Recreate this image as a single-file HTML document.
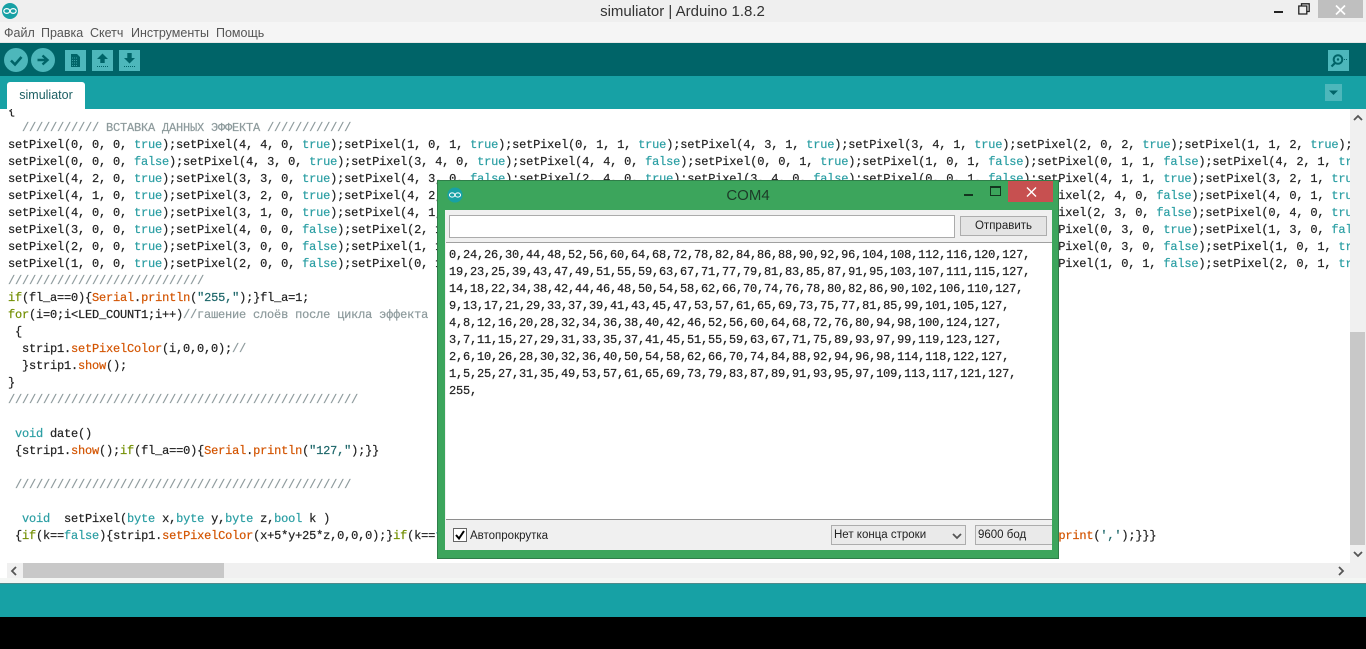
<!DOCTYPE html>
<html><head><meta charset="utf-8"><title>simuliator | Arduino 1.8.2</title>
<style>
html,body{margin:0;padding:0;width:1366px;height:649px;overflow:hidden;background:#000}
.a{position:absolute}
body{font-family:"Liberation Sans",sans-serif;color:#222}
#ed pre,#mon pre{margin:0;position:absolute;font:12px/17px "Liberation Mono","DejaVu Sans Mono",monospace;letter-spacing:-.2px;white-space:pre;-webkit-text-stroke:.2px currentColor}
#ed pre{left:8px;top:-6px;color:#222}
i{font-style:normal;color:#2a9ea3}
b{font-weight:normal;color:#d35400}
u{text-decoration:none;color:#728e00}
s{text-decoration:none;color:#8d9a9c}
em{font-style:normal;color:#1c6669}
.m{font-size:12.5px;color:#555;top:26px;line-height:15px}
.sel{background:#eaeaea;border:1px solid #adadad;box-sizing:border-box;font-size:11.5px;line-height:19px;color:#222;padding-left:2px}
</style></head><body>
<div class="a" style="left:0;top:0;width:1366px;height:22px;background:#efefef"></div>
<svg class="a" style="left:1px;top:2px" width="18" height="18" viewBox="0 0 18 18"><circle cx="9" cy="9" r="8" fill="#17a1a5"/><ellipse cx="5.8" cy="9" rx="3" ry="2.4" fill="none" stroke="#fff" stroke-width="1.2"/><ellipse cx="12.2" cy="9" rx="3" ry="2.4" fill="none" stroke="#fff" stroke-width="1.2"/></svg>
<div class="a" style="left:0;width:1365px;top:3px;text-align:center;font-size:15px;line-height:18px;color:#333">simuliator | Arduino 1.8.2</div>
<div class="a" style="left:1274px;top:11px;width:9px;height:2px;background:#222"></div>
<svg class="a" style="left:1298px;top:3px" width="12" height="12" viewBox="0 0 12 12"><path d="M3.5 2.5V.8h7.7v7.7H9M.8 3h8v8h-8z" fill="none" stroke="#222" stroke-width="1.3"/></svg>
<div class="a" style="left:1318px;top:0;width:45px;height:18px;background:#bfbfbf"></div>
<svg class="a" style="left:1335px;top:5px" width="11" height="10" viewBox="0 0 11 10"><path d="M1 .5L10 9.5M10 .5L1 9.5" stroke="#fff" stroke-width="1.7"/></svg>

<div class="a" style="left:0;top:22px;width:1366px;height:20px;background:#f5f5f5"></div>
<div class="a m" style="left:4px">Файл</div>
<div class="a m" style="left:41px">Правка</div>
<div class="a m" style="left:90px">Скетч</div>
<div class="a m" style="left:131px">Инструменты</div>
<div class="a m" style="left:216px">Помощь</div>
<div class="a" style="left:0;top:42px;width:1366px;height:1px;background:#e6e6e6"></div>

<div class="a" style="left:0;top:43px;width:1366px;height:33px;background:#006468"></div>
<div class="a" style="left:0;top:76px;width:1366px;height:33px;background:#17a1a5"></div>
<svg class="a" style="left:0;top:44px" width="150" height="32" viewBox="0 0 150 32">
<circle cx="16" cy="16" r="12" fill="#4db7bb"/><path d="M11 16.5l4 4 6.500-7.500" fill="none" stroke="#006468" stroke-width="2.600"/>
<circle cx="43" cy="16" r="12" fill="#4db7bb"/><path d="M37.500 16h8M42.500 11.500l5 4.500-5 4.500" fill="none" stroke="#006468" stroke-width="2.400"/>
<rect x="65" y="6" width="21" height="21" fill="#4db7bb"/><path d="M71 10h6l3 3v10h-9z" fill="#006468"/><path d="M72 14h6M72 16.500h6M72 19h6M72 21.500h6" stroke="#4db7bb" stroke-width=".8" stroke-dasharray="1 1"/>
<rect x="92" y="6" width="21" height="21" fill="#4db7bb"/><path d="M102.500 9.500l5.500 5.500h-3.300v4h-4.400v-4H97z" fill="#006468"/><path d="M97 22.500h11" stroke="#006468" stroke-dasharray="1 1"/>
<rect x="119" y="6" width="21" height="21" fill="#4db7bb"/><path d="M127.300 9h4.400v5h3.300l-5.500 5.500-5.500-5.500h3.300z" fill="#006468"/><path d="M124 22.500h11" stroke="#006468" stroke-dasharray="1 1"/>
</svg>
<svg class="a" style="left:1328px;top:50px" width="21" height="21" viewBox="0 0 21 21"><rect width="21" height="21" fill="#4db7bb"/><circle cx="10" cy="9.500" r="4.300" fill="none" stroke="#006468" stroke-width="2"/><circle cx="10" cy="9.500" r="1.200" fill="#006468"/><path d="M7 13l-3.500 3.500" stroke="#006468" stroke-width="2.200"/><path d="M16 9.500h3" stroke="#006468" stroke-dasharray="1 1"/></svg>
<div class="a" style="left:7px;top:82px;width:78px;height:27px;background:#fff;border-radius:3px 3px 0 0;text-align:center;font-size:12.5px;line-height:26px;color:#1c5f63">simuliator</div>
<svg class="a" style="left:1325px;top:84px" width="17" height="17" viewBox="0 0 17 17"><rect width="17" height="17" fill="#4db7bb"/><path d="M4 6.500h9L8.500 11z" fill="#006468"/></svg>

<div class="a" id="ed" style="left:0;top:109px;width:1350px;height:454px;background:#fff;overflow:hidden">
<pre>{
  <s>/////////// ВСТАВКА ДАННЫХ ЭФФЕКТА ////////////</s>
setPixel(0, 0, 0, <i>true</i>);setPixel(4, 4, 0, <i>true</i>);setPixel(1, 0, 1, <i>true</i>);setPixel(0, 1, 1, <i>true</i>);setPixel(4, 3, 1, <i>true</i>);setPixel(3, 4, 1, <i>true</i>);setPixel(2, 0, 2, <i>true</i>);setPixel(1, 1, 2, <i>true</i>);
setPixel(0, 0, 0, <i>false</i>);setPixel(4, 3, 0, <i>true</i>);setPixel(3, 4, 0, <i>true</i>);setPixel(4, 4, 0, <i>false</i>);setPixel(0, 0, 1, <i>true</i>);setPixel(1, 0, 1, <i>false</i>);setPixel(0, 1, 1, <i>false</i>);setPixel(4, 2, 1, <i>true</i>);
setPixel(4, 2, 0, <i>true</i>);setPixel(3, 3, 0, <i>true</i>);setPixel(4, 3, 0, <i>false</i>);setPixel(2, 4, 0, <i>true</i>);setPixel(3, 4, 0, <i>false</i>);setPixel(0, 0, 1, <i>false</i>);setPixel(4, 1, 1, <i>true</i>);setPixel(3, 2, 1, <i>true</i>);
setPixel(4, 1, 0, <i>true</i>);setPixel(3, 2, 0, <i>true</i>);setPixel(4, 2, 0, <i>false</i>);setPixel(2, 3, 0, <i>true</i>);setPixel(3, 3, 0, <i>false</i>);setPixel(1, 4, 0, <i>true</i>);setPixel(2, 4, 0, <i>false</i>);setPixel(4, 0, 1, <i>true</i>);
setPixel(4, 0, 0, <i>true</i>);setPixel(3, 1, 0, <i>true</i>);setPixel(4, 1, 0, <i>false</i>);setPixel(2, 2, 0, <i>true</i>);setPixel(3, 2, 0, <i>false</i>);setPixel(1, 3, 0, <i>true</i>);setPixel(2, 3, 0, <i>false</i>);setPixel(0, 4, 0, <i>true</i>);
setPixel(3, 0, 0, <i>true</i>);setPixel(4, 0, 0, <i>false</i>);setPixel(2, 1, 0, <i>true</i>);setPixel(3, 1, 0, <i>false</i>);setPixel(1, 2, 0, <i>true</i>);setPixel(2, 2, 0, <i>false</i>);setPixel(0, 3, 0, <i>true</i>);setPixel(1, 3, 0, <i>false</i>);
setPixel(2, 0, 0, <i>true</i>);setPixel(3, 0, 0, <i>false</i>);setPixel(1, 1, 0, <i>true</i>);setPixel(2, 1, 0, <i>false</i>);setPixel(0, 2, 0, <i>true</i>);setPixel(1, 2, 0, <i>false</i>);setPixel(0, 3, 0, <i>false</i>);setPixel(1, 0, 1, <i>true</i>);
setPixel(1, 0, 0, <i>true</i>);setPixel(2, 0, 0, <i>false</i>);setPixel(0, 1, 0, <i>true</i>);setPixel(1, 1, 0, <i>false</i>);setPixel(0, 2, 0, <i>false</i>);setPixel(0, 0, 1, <i>true</i>);setPixel(1, 0, 1, <i>false</i>);setPixel(2, 0, 1, <i>true</i>);
<s>////////////////////////////</s>
<u>if</u>(fl_a==0){<b>Serial</b>.<b>println</b>(<em>"255,"</em>);}fl_a=1;
<u>for</u>(i=0;i&lt;LED_COUNT1;i++)<s>//гашение слоёв после цикла эффекта</s>
 {
  strip1.<b>setPixelColor</b>(i,0,0,0);<s>//</s>
  }strip1.<b>show</b>();
}
<s>//////////////////////////////////////////////////</s>

 <i>void</i> date()
 {strip1.<b>show</b>();<u>if</u>(fl_a==0){<b>Serial</b>.<b>println</b>(<em>"127,"</em>);}}

 <s>////////////////////////////////////////////////</s>

  <i>void</i>  setPixel(<i>byte</i> x,<i>byte</i> y,<i>byte</i> z,<i>bool</i> k )
 {<u>if</u>(k==<i>false</i>){strip1.<b>setPixelColor</b>(x+5*y+25*z,0,0,0);}<u>if</u>(k==<i>true</i>){strip1.<b>setPixelColor</b>(x+5*y+25*z,255,255,255);<b>Serial</b>.<b>print</b>(x+5*y+25*z);      <b>Serial</b>.<b>print</b>(<em>','</em>);}}}</pre>
</div>

<div class="a" style="left:1350px;top:109px;width:16px;height:469px;background:#f0f0f0"></div>
<div class="a" style="left:1350px;top:332px;width:15px;height:213px;background:#c8c8c8"></div>
<svg class="a" style="left:1353px;top:114px" width="10" height="8" viewBox="0 0 10 8"><path d="M1 6l4-4 4 4" fill="none" stroke="#555" stroke-width="1.800"/></svg>
<svg class="a" style="left:1353px;top:550px" width="10" height="8" viewBox="0 0 10 8"><path d="M1 2l4 4 4-4" fill="none" stroke="#555" stroke-width="1.800"/></svg>
<div class="a" style="left:7px;top:563px;width:1343px;height:15px;background:#f0f0f0"></div>
<div class="a" style="left:0;top:563px;width:7px;height:20px;background:#fff"></div>
<div class="a" style="left:23px;top:563px;width:201px;height:15px;background:#c8c8c8"></div>
<svg class="a" style="left:10px;top:566px" width="8" height="10" viewBox="0 0 8 10"><path d="M6 1L2 5l4 4" fill="none" stroke="#555" stroke-width="1.800"/></svg>
<svg class="a" style="left:1337px;top:566px" width="8" height="10" viewBox="0 0 8 10"><path d="M2 1l4 4-4 4" fill="none" stroke="#555" stroke-width="1.800"/></svg>
<div class="a" style="left:0;top:578px;width:1366px;height:5px;background:#f4f6f4"></div>
<div class="a" style="left:0;top:583px;width:1366px;height:34px;background:#17a1a5;border-top:1px solid #4e8a8c;box-sizing:border-box"></div>
<div class="a" style="left:0;top:617px;width:1366px;height:32px;background:#000"></div>

<!-- dialog -->
<div class="a" style="left:437px;top:180px;width:622px;height:379px;background:#3ca55c;border:1px solid #2f7d49;box-sizing:border-box"></div>
<svg class="a" style="left:447px;top:187px" width="16" height="16" viewBox="0 0 18 18"><circle cx="9" cy="9" r="8.500" fill="#17a1a5"/><ellipse cx="5.800" cy="9" rx="3" ry="2.400" fill="none" stroke="#fff" stroke-width="1.200"/><ellipse cx="12.200" cy="9" rx="3" ry="2.400" fill="none" stroke="#fff" stroke-width="1.200"/></svg>
<div class="a" style="left:698px;width:100px;top:187px;text-align:center;font-size:15px;line-height:18px;color:#1d3b28">COM4</div>
<div class="a" style="left:964px;top:194px;width:9px;height:2px;background:#14351f"></div>
<div class="a" style="left:990px;top:186px;width:9px;height:7px;border:1px solid #14351f;border-top-width:2px;box-sizing:content-box"></div>
<div class="a" style="left:1008px;top:181px;width:45px;height:21px;background:#c75050"></div>
<svg class="a" style="left:1026px;top:187px" width="11" height="10" viewBox="0 0 11 10"><path d="M1 .5L10 9.500M10 .5L1 9.500" stroke="#fff" stroke-width="1.400"/></svg>

<div class="a" style="left:445px;top:210px;width:607px;height:340px;background:#f0f0f0"></div>
<div class="a" style="left:449px;top:215px;width:506px;height:23px;background:#fff;border:1px solid #ababab;box-sizing:border-box"></div>
<div class="a" style="left:960px;top:216px;width:87px;height:20px;background:#e4e4e4;border:1px solid #adadad;box-sizing:border-box;text-align:center;font-size:11.500px;line-height:18px;color:#222">Отправить</div>
<div class="a" id="mon" style="left:446px;top:242px;width:606px;height:277px;background:#fff;border-top:1px solid #a0a0a0;box-sizing:border-box;overflow:hidden">
<pre style="left:3px;top:4px;color:#222">0,24,26,30,44,48,52,56,60,64,68,72,78,82,84,86,88,90,92,96,104,108,112,116,120,127,
19,23,25,39,43,47,49,51,55,59,63,67,71,77,79,81,83,85,87,91,95,103,107,111,115,127,
14,18,22,34,38,42,44,46,48,50,54,58,62,66,70,74,76,78,80,82,86,90,102,106,110,127,
9,13,17,21,29,33,37,39,41,43,45,47,53,57,61,65,69,73,75,77,81,85,99,101,105,127,
4,8,12,16,20,28,32,34,36,38,40,42,46,52,56,60,64,68,72,76,80,94,98,100,124,127,
3,7,11,15,27,29,31,33,35,37,41,45,51,55,59,63,67,71,75,89,93,97,99,119,123,127,
2,6,10,26,28,30,32,36,40,50,54,58,62,66,70,74,84,88,92,94,96,98,114,118,122,127,
1,5,25,27,31,35,49,53,57,61,65,69,73,79,83,87,89,91,93,95,97,109,113,117,121,127,
255,</pre>
</div>
<div class="a" style="left:446px;top:519px;width:606px;height:1px;background:#8e8e8e"></div>
<svg class="a" style="left:453px;top:528px" width="14" height="14" viewBox="0 0 14 14"><rect x=".5" y=".5" width="13" height="13" fill="#fff" stroke="#666"/><path d="M3 7l3 3.500L11 3" fill="none" stroke="#000" stroke-width="2"/></svg>
<div class="a" style="left:470px;top:528px;font-size:11.500px;line-height:16px;color:#222">Автопрокрутка</div>
<div class="a sel" style="left:831px;top:525px;width:135px;height:20px">Нет конца строки</div>
<svg class="a" style="left:952px;top:532px" width="10" height="8" viewBox="0 0 10 8"><path d="M1 2l4 4 4-4" fill="none" stroke="#555" stroke-width="1.800"/></svg>
<div class="a sel" style="left:975px;top:525px;width:77px;height:20px;border-right:0">9600 бод</div>
</body></html>
